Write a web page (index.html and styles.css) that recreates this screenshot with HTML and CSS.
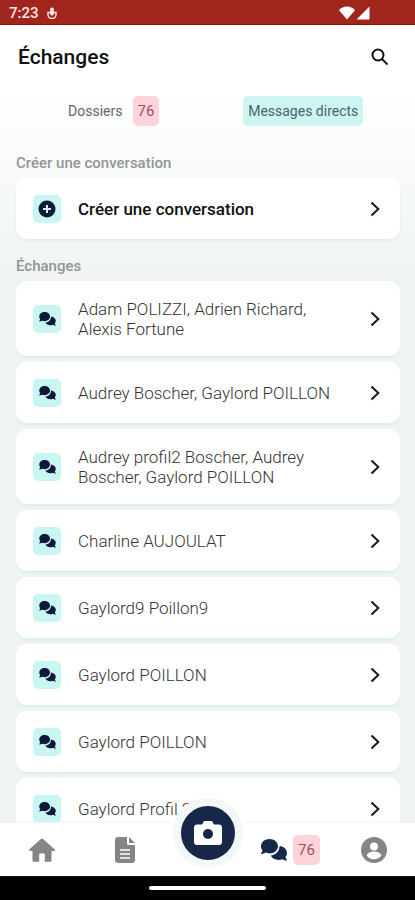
FILE: index.html
```html
<!DOCTYPE html>
<html lang="fr">
  <head>
    <meta charset="UTF-8" />
    <meta name="viewport" content="width=device-width, initial-scale=1.0" />
    <title>Échanges</title>
    <link rel="stylesheet" href="styles.css">
  </head>

  <body>
    <!-- shared icons -->
    <svg class="sprite" aria-hidden="true">
      <symbol id="comments" viewBox="0 0 26 22">
        <path d="M8.5 0C13.2 0 17 3.2 17 7.2s-3.8 7.2-8.5 7.2c-1.400 0-2.700-.3-3.900-.8C3.400 14.300 1.900 14.900.4 14.900c-.4 0-.5-.5-.3-.8.7-.8 1.200-1.700 1.400-2.600C.6 10.200 0 8.800 0 7.200 0 3.200 3.800 0 8.500 0z" />
        <path d="M18.500 6.900C22.800 7.400 26 10.300 26 13.900c0 1.600-.6 3-1.600 4.200.2.900.7 1.800 1.500 2.600.2.300.1.800-.3.800-1.500 0-3-.5-4.200-1.300-1.200.5-2.500.8-3.900.8-3.500 0-6.500-1.800-7.800-4.400 5.100-.6 9-4.600 8.800-9.700z" />
      </symbol>
      <symbol id="chevron" viewBox="0 0 10 16">
        <path d="M1.500 1.500 8.300 8l-6.800 6.500" fill="none" stroke="currentColor" stroke-width="2" />
      </symbol>
    </svg>

    <div class="app">
      <div class="status-bar">
        <span>7:23</span>
        <svg class="status-app" viewBox="0 0 10 12">
          <circle cx="5" cy="2.500" r="2" />
          <path d="M1 5.500h8v2c0 2.500-2 4-4 4s-4-1.500-4-4z" fill="none" stroke="currentColor" stroke-width="1.400" />
          <path d="M3 4h4v3L5 9 3 7z" />
        </svg>
        <svg class="status-network" viewBox="0 0 32 14">
          <path d="M0 4.200C4-.8 12-.8 16 4.200L8 13.500z" />
          <path d="M30.500.5v13h-13z" />
        </svg>
      </div>

      <header class="header">
        <h1>Échanges</h1>
        <button type="button" class="search" aria-label="Rechercher">
          <svg viewBox="0 0 18 18">
            <circle cx="7" cy="7" r="5.500" />
            <path d="m11 11 5.500 5.500" />
          </svg>
        </button>
      </header>

      <div class="tabs">
        <button type="button" class="tab">Dossiers <span class="badge">76</span></button>
        <button type="button" class="tab"><span class="tab-active">Messages directs</span></button>
      </div>

      <main class="content">
        <h2>Créer une conversation</h2>
        <a href="#" class="card card-create">
          <span class="card-icon">
            <svg class="icon-plus" viewBox="0 0 18 18">
              <circle cx="9" cy="9" r="8.500" />
              <path d="M9 5v8M5 9h8" />
            </svg>
          </span>
          <span class="card-name">Créer une conversation</span>
          <svg class="chevron"><use href="#chevron" /></svg>
        </a>

        <h2>Échanges</h2>
        <div class="list">
          <a href="#" class="card">
            <span class="card-icon"><svg><use href="#comments" /></svg></span>
            <span class="card-name">Adam POLIZZI, Adrien Richard, Alexis Fortune</span>
            <svg class="chevron"><use href="#chevron" /></svg>
          </a>
          <a href="#" class="card">
            <span class="card-icon"><svg><use href="#comments" /></svg></span>
            <span class="card-name">Audrey Boscher, Gaylord POILLON</span>
            <svg class="chevron"><use href="#chevron" /></svg>
          </a>
          <a href="#" class="card">
            <span class="card-icon"><svg><use href="#comments" /></svg></span>
            <span class="card-name">Audrey profil2 Boscher, Audrey Boscher, Gaylord POILLON</span>
            <svg class="chevron"><use href="#chevron" /></svg>
          </a>
          <a href="#" class="card">
            <span class="card-icon"><svg><use href="#comments" /></svg></span>
            <span class="card-name">Charline AUJOULAT</span>
            <svg class="chevron"><use href="#chevron" /></svg>
          </a>
          <a href="#" class="card">
            <span class="card-icon"><svg><use href="#comments" /></svg></span>
            <span class="card-name">Gaylord9 Poillon9</span>
            <svg class="chevron"><use href="#chevron" /></svg>
          </a>
          <a href="#" class="card">
            <span class="card-icon"><svg><use href="#comments" /></svg></span>
            <span class="card-name">Gaylord POILLON</span>
            <svg class="chevron"><use href="#chevron" /></svg>
          </a>
          <a href="#" class="card">
            <span class="card-icon"><svg><use href="#comments" /></svg></span>
            <span class="card-name">Gaylord POILLON</span>
            <svg class="chevron"><use href="#chevron" /></svg>
          </a>
          <a href="#" class="card">
            <span class="card-icon"><svg><use href="#comments" /></svg></span>
            <span class="card-name">Gaylord Profil 2</span>
            <svg class="chevron"><use href="#chevron" /></svg>
          </a>
        </div>
      </main>

      <nav class="nav">
        <a href="#" aria-label="Accueil">
          <svg class="nav-home" viewBox="0 0 26 24">
            <path d="M13 .5c.4 0 .8.200 1.100.5L25.500 11.300c.6.600.3 1.700-.7 1.700H22.500v9.500c0 .8-.5 1.300-1.300 1.300h-5.400v-7.300c0-.6-.4-1-1-1h-3.600c-.6 0-1 .4-1 1v7.300H4.800c-.8 0-1.300-.5-1.300-1.300V13H1.200c-1 0-1.300-1.100-.7-1.700L11.900 1c.3-.3.700-.5 1.100-.5z" />
          </svg>
        </a>
        <a href="#" aria-label="Documents">
          <svg class="nav-file" viewBox="0 0 20 26">
            <path d="M3 0h9v6.500C12 7.500 12.500 8 13.500 8H20v15c0 1.700-1.300 3-3 3H3c-1.700 0-3-1.300-3-3V3c0-1.700 1.300-3 3-3z" />
            <path d="M14 0l6 6h-6z" />
            <path d="M5 13h10M5 17h10M5 21h10" stroke="#fff" stroke-width="1.500" />
          </svg>
        </a>
        <a href="#" class="nav-photo" aria-label="Photo">
          <svg viewBox="0 0 28 24">
            <path d="M3 3.500h5L9.500.8C9.800.3 10.200 0 10.800 0h6.400c.6 0 1 .3 1.300.8L20 3.500h5c1.700 0 3 1.300 3 3V21c0 1.700-1.300 3-3 3H3c-1.700 0-3-1.300-3-3V6.500c0-1.700 1.300-3 3-3z" fill="#fff" />
            <circle cx="14" cy="13" r="5" />
          </svg>
        </a>
        <a href="#" class="nav-messages" aria-label="Messages">
          <svg><use href="#comments" /></svg>
          <span class="badge">76</span>
        </a>
        <a href="#" aria-label="Profil">
          <svg class="nav-profile" viewBox="0 0 26 26">
            <circle cx="13" cy="13" r="13" />
            <circle cx="13" cy="9.500" r="4" fill="#fff" />
            <path d="M5.500 18.500c1-2.700 4-4 7.500-4s6.500 1.300 7.500 4c-1.800 2.300-4.300 3.800-7.500 3.800s-5.700-1.500-7.500-3.800z" fill="#fff" />
          </svg>
        </a>
      </nav>

      <div class="system-bar"><span class="handle"></span></div>
    </div>
  </body>
</html>
```
FILE: styles.css
```css
* {
  box-sizing: border-box;
}

body {
  margin: 0;
  font-family: Roboto, "Liberation Sans", sans-serif;
  color: #111;
}

a {
  color: inherit;
  text-decoration: none;
}

button {
  padding: 0;
  border: none;
  background: none;
  font-family: inherit;
  cursor: pointer;
}

.sprite {
  display: none;
}

.app {
  display: flex;
  flex-direction: column;
  height: 100vh;
  background: linear-gradient(#fff 90px, #eff4f3 280px);
}

.status-bar {
  display: flex;
  align-items: center;
  gap: 8px;
  height: 25px;
  padding: 2px 44px 0 9px;
  background-color: #9f251d;
  border-bottom: 1px solid #8e1711;
  color: #fbe9e7;
  font-size: 15px;
  font-weight: 500;
}

.status-app {
  width: 10px;
  height: 12px;
  fill: currentColor;
}

.status-network {
  width: 32px;
  height: 14px;
  margin-left: auto;
  fill: #fff;
}

.header {
  display: flex;
  justify-content: space-between;
  align-items: center;
  height: 63px;
  padding: 0 26px 0 18px;
}

h1 {
  margin: 0;
  font-size: 21px;
  font-weight: 500;
}

.search svg {
  display: block;
  width: 18px;
  height: 18px;
  fill: none;
  stroke: #111;
  stroke-width: 2;
}

.tabs {
  display: grid;
  grid-template-columns: 1fr 1fr;
  height: 46px;
  padding: 0 17px 0 19px;
}

.tab {
  display: flex;
  justify-content: center;
  align-items: center;
  gap: 10px;
  color: #666;
  font-size: 14px;
}

.tab-active {
  padding: 0 5px;
  border-radius: 5px;
  background-color: #cdf6f3;
  color: #4a6467;
  line-height: 30px;
}

.badge {
  padding: 0 5px;
  border-radius: 5px;
  background-color: #ffd3da;
  color: #a3505a;
  font-size: 15px;
  line-height: 30px;
}

.content {
  flex: 1;
  min-height: 0;
  overflow: hidden;
  padding: 19px 15px 0 16px;
}

h2 {
  margin: 0 0 5px;
  color: #929695;
  font-size: 15px;
  font-weight: 500;
  line-height: 20px;
}

.list {
  display: flex;
  flex-direction: column;
  gap: 6px;
}

.card {
  display: flex;
  align-items: center;
  min-height: 61px;
  padding: 0 20px 0 17px;
  border-radius: 11px;
  background-color: #fff;
  box-shadow: 0 2px 3px #dcecea;
  color: #333;
  font-size: 17px;
  font-weight: 300;
  line-height: 20px;
}

.card-create {
  margin-bottom: 17px;
  color: #111;
  font-weight: 500;
}

.card-icon {
  display: flex;
  flex-shrink: 0;
  justify-content: center;
  align-items: center;
  width: 28px;
  height: 28px;
  margin-right: 17px;
  border-radius: 5px;
  background-color: #c9f6f3;
}

.card-icon svg {
  width: 17px;
  height: 14px;
  fill: #0d1a38;
}

.card-icon .icon-plus {
  width: 18px;
  height: 18px;
}

.icon-plus path {
  stroke: #c9f6f3;
  stroke-width: 2;
}

.card-name {
  flex: 1;
  padding: 18px 30px 17px 0;
}

.chevron {
  flex-shrink: 0;
  width: 10px;
  height: 16px;
  color: #16162a;
}

.nav {
  position: relative;
  display: grid;
  grid-template-columns: repeat(5, 1fr);
  height: 53px;
  background-color: #fff;
  box-shadow: 0 -1px 2px #eef3f2;
}

.nav a {
  display: flex;
  justify-content: center;
  align-items: center;
}

.nav svg {
  fill: #858585;
}

.nav-home {
  width: 26px;
  height: 24px;
}

.nav-file {
  width: 20px;
  height: 26px;
}

.nav-profile {
  width: 26px;
  height: 26px;
}

/* round button raised above the bar */
.nav .nav-photo {
  position: absolute;
  top: -25px;
  left: 50%;
  width: 70px;
  height: 70px;
  border: 8px solid #f3f8f6;
  border-radius: 50%;
  background-color: #17274a;
  transform: translateX(-50%);
}

.nav .nav-photo svg {
  width: 28px;
  height: 24px;
  fill: #17274a;
}

.nav-messages {
  grid-column: 4;
  gap: 6px;
}

.nav .nav-messages svg {
  width: 26px;
  height: 22px;
  fill: #17274a;
}

.system-bar {
  display: flex;
  justify-content: center;
  align-items: center;
  height: 24px;
  background-color: #000;
}

.handle {
  width: 28%;
  height: 4px;
  border-radius: 2px;
  background-color: #fff;
}
```
